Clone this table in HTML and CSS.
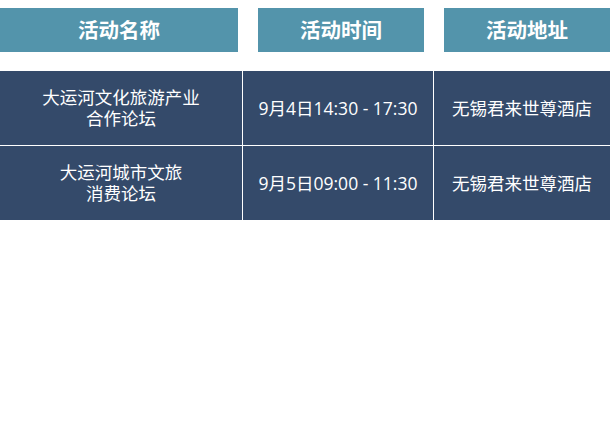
FILE: index.html
```
<!DOCTYPE html>
<html lang="zh">
<head>
<meta charset="utf-8">
<link rel="stylesheet" href="styles.css">
</head>
<body>
<div class="head">
  <div class="hcell">活动名称</div>
  <div class="hcell">活动时间</div>
  <div class="hcell">活动地址</div>
</div>
<div class="table">
  <div class="cell name">大运河文化旅游产业<br>合作论坛</div>
  <div class="cell">9月4日14:30 - 17:30</div>
  <div class="cell">无锡君来世尊酒店</div>
  <div class="cell name">大运河城市文旅<br>消费论坛</div>
  <div class="cell">9月5日09:00 - 11:30</div>
  <div class="cell">无锡君来世尊酒店</div>
</div>
</body>
</html>
```
FILE: styles.css
```
html, body {
  margin: 0;
  padding: 0;
  background: #ffffff;
}
body {
  width: 610px;
  font-family: "Open Sans", "Noto Sans CJK SC", sans-serif;
  color: #ffffff;
}
.head {
  display: grid;
  grid-template-columns: 238px 166px 166px;
  column-gap: 20px;
  padding-top: 8px;
}
.hcell {
  height: 44px;
  background: #5394ab;
  display: flex;
  align-items: center;
  justify-content: center;
  font-family: "Noto Sans CJK SC", sans-serif;
  font-weight: 700;
  font-size: 20.5px;
  line-height: 24px;
  padding-bottom: 2px;
  box-sizing: border-box;
}
.table {
  margin-top: 19px;
  display: grid;
  grid-template-columns: 242px 190px 176px;
  grid-template-rows: 74px 74px;
  gap: 1px;
  background: #ffffff;
}
.cell {
  background: #344a6a;
  display: flex;
  align-items: center;
  justify-content: center;
  text-align: center;
  font-size: 17.5px;
  line-height: 21px;
}
.name {
  font-family: "Liberation Sans", "Noto Sans CJK SC", sans-serif;
  padding-top: 1px;
}
```
